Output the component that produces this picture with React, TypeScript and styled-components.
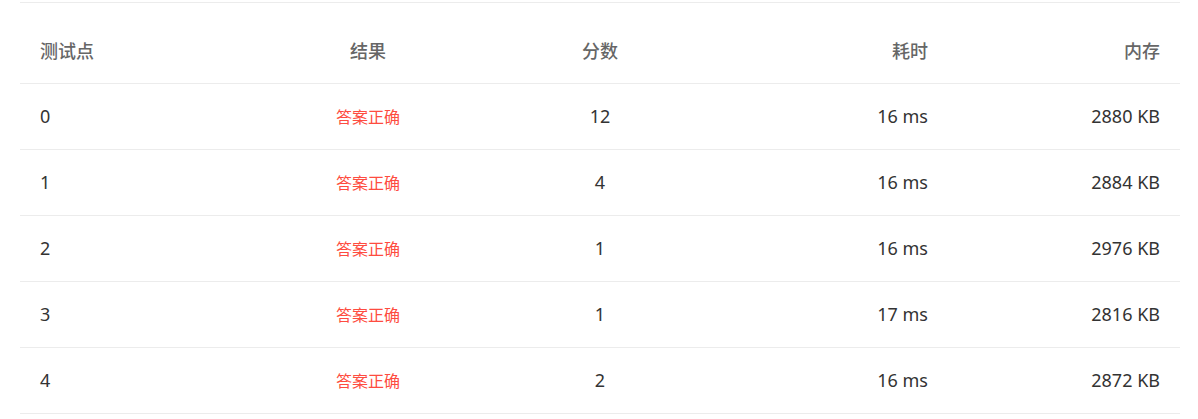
import React from "react";
import styled, { createGlobalStyle } from "styled-components";

const GlobalStyle = createGlobalStyle`
  html, body {
    margin: 0;
    padding: 0;
    background: #fff;
  }
  body {
    font-family: "Noto Sans", "Noto Sans CJK SC", sans-serif;
  }
`;

const Page = styled.div`
  padding: 2px 18px 0 20px;
`;

const Table = styled.div`
  border-top: 1px solid #ececec;
`;

const Row = styled.div<{ $head?: boolean }>`
  display: grid;
  grid-template-columns: repeat(5, 1fr);
  align-items: center;
  height: ${(p) => (p.$head ? "81px" : "66px")};
  padding: ${(p) => (p.$head ? "13px 0 0" : "0 0 2px")};
  box-sizing: border-box;
  border-bottom: 1px solid #ececec;
`;

type Align = "left" | "center" | "right";

const Cell = styled.div<{ $align: Align; $head?: boolean }>`
  padding: 0 20px;
  text-align: ${(p) => p.$align};
  font-size: 18px;
  font-weight: ${(p) => (p.$head ? 500 : 400)};
  color: ${(p) => (p.$head ? "#666" : "#333")};
`;

const Status = styled.span`
  font-size: 16px;
  color: #fe4c40;
`;

const aligns: Align[] = ["left", "center", "center", "right", "right"];
const headers = ["测试点", "结果", "分数", "耗时", "内存"];

const rows = [
  { id: 0, score: 12, time: 16, mem: 2880 },
  { id: 1, score: 4, time: 16, mem: 2884 },
  { id: 2, score: 1, time: 16, mem: 2976 },
  { id: 3, score: 1, time: 17, mem: 2816 },
  { id: 4, score: 2, time: 16, mem: 2872 },
];

export default function App() {
  return (
    <Page>
      <GlobalStyle />
      <Table>
        <Row $head>
          {headers.map((h, i) => (
            <Cell key={h} $align={aligns[i]} $head>
              {h}
            </Cell>
          ))}
        </Row>
        {rows.map((r) => (
          <Row key={r.id}>
            <Cell $align="left">{r.id}</Cell>
            <Cell $align="center">
              <Status>答案正确</Status>
            </Cell>
            <Cell $align="center">{r.score}</Cell>
            <Cell $align="right">{r.time} ms</Cell>
            <Cell $align="right">{r.mem} KB</Cell>
          </Row>
        ))}
      </Table>
    </Page>
  );
}
